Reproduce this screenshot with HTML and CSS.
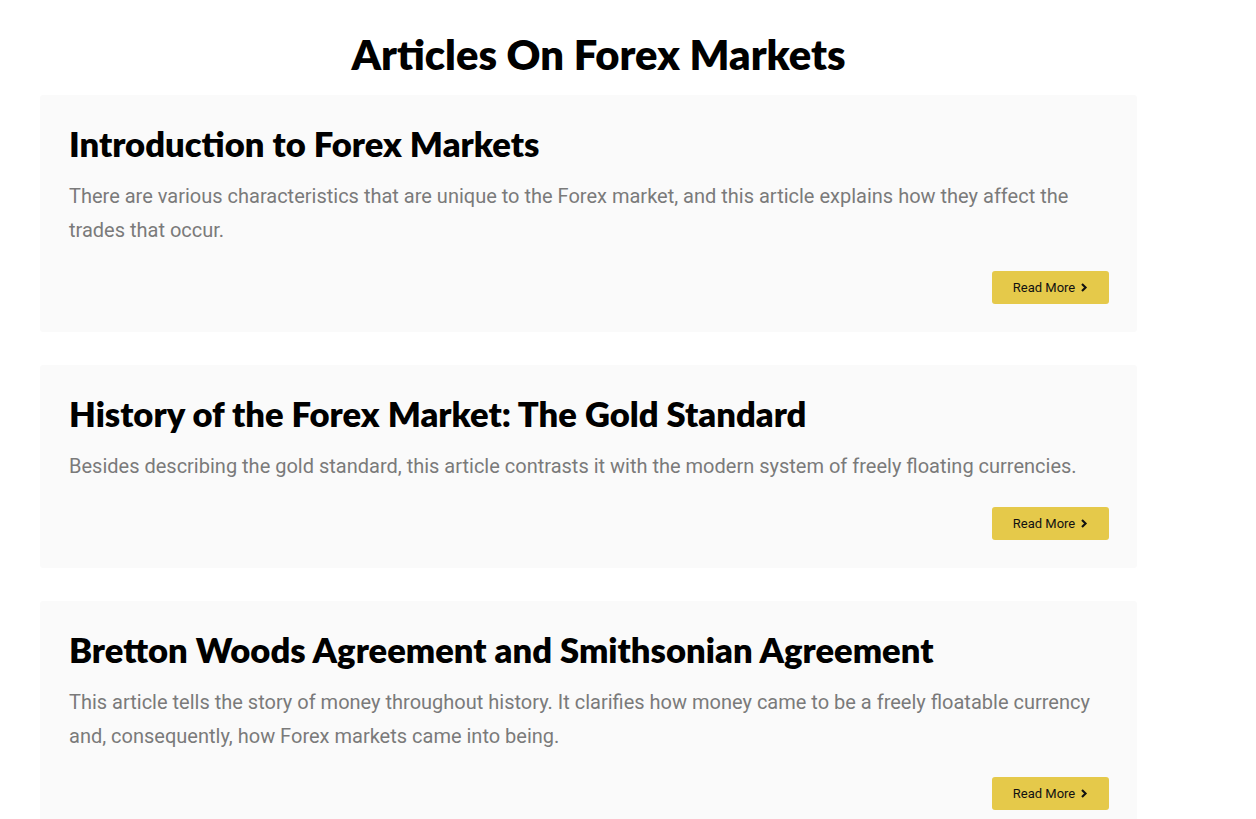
FILE: index.html
```html
<!DOCTYPE html>
<html>
<head>
<meta charset="utf-8">
<link rel="stylesheet" href="styles.css">
</head>
<body>
<div class="page">
  <h1 class="page-title">Articles On Forex Markets</h1>
  <div class="cards">
    <div class="card">
      <h2 class="card-title">Introduction to Forex Markets</h2>
      <p class="card-text">There are various characteristics that are unique to the Forex market, and this article explains how they affect the trades that occur.</p>
      <div class="card-actions">
        <a class="btn" href="#">Read More <svg class="chev" viewBox="0 0 10 12" width="8" height="11"><path d="M2.5 1.5 L7 6 L2.5 10.5" fill="none" stroke="#111" stroke-width="2.6"/></svg></a>
      </div>
    </div>
    <div class="card">
      <h2 class="card-title">History of the Forex Market: The Gold Standard</h2>
      <p class="card-text">Besides describing the gold standard, this article contrasts it with the modern system of freely floating currencies.</p>
      <div class="card-actions">
        <a class="btn" href="#">Read More <svg class="chev" viewBox="0 0 10 12" width="8" height="11"><path d="M2.5 1.5 L7 6 L2.5 10.5" fill="none" stroke="#111" stroke-width="2.6"/></svg></a>
      </div>
    </div>
    <div class="card">
      <h2 class="card-title">Bretton Woods Agreement and Smithsonian Agreement</h2>
      <p class="card-text">This article tells the story of money throughout history. It clarifies how money came to be a freely floatable currency and, consequently, how Forex markets came into being.</p>
      <div class="card-actions">
        <a class="btn" href="#">Read More <svg class="chev" viewBox="0 0 10 12" width="8" height="11"><path d="M2.5 1.5 L7 6 L2.5 10.5" fill="none" stroke="#111" stroke-width="2.6"/></svg></a>
      </div>
    </div>
  </div>
</div>
</body>
</html>
```
FILE: styles.css
```css
html, body {
  margin: 0;
  padding: 0;
  background: #ffffff;
}
.page {
  width: 1117px;
  margin-left: 40px;
  padding-top: 28px;
}
.page-title {
  margin: 0 0 15px 0;
  text-align: center;
  font-family: "Lato", "Noto Sans", sans-serif;
  font-weight: 800;
  font-size: 41.7px;
  line-height: 52px;
  color: #000;
}
.cards {
  display: flex;
  flex-direction: column;
  gap: 33px;
  width: 1097px;
}
.card {
  background: #fafafa;
  border-radius: 3px;
  padding: 28px 28px 28px 29px;
}
.card-title {
  margin: 0;
  font-family: "Lato", "Noto Sans", sans-serif;
  font-weight: 800;
  font-size: 34.6px;
  line-height: 42px;
  color: #000;
}
.card-text {
  margin: 14px 0 0 0;
  font-family: "Roboto", sans-serif;
  font-size: 20px;
  line-height: 34px;
  color: #7a7a7a;
}
.card-actions {
  display: flex;
  justify-content: flex-end;
  margin-top: 24px;
}
.btn {
  display: inline-flex;
  align-items: center;
  gap: 5px;
  height: 33px;
  width: 117px;
  justify-content: center;
  box-sizing: border-box;
  background: #e5c94a;
  border-radius: 3px;
  font-family: "Roboto", sans-serif;
  font-size: 13px;
  color: #111;
  text-decoration: none;
}
.chev {
  display: block;
}
```
